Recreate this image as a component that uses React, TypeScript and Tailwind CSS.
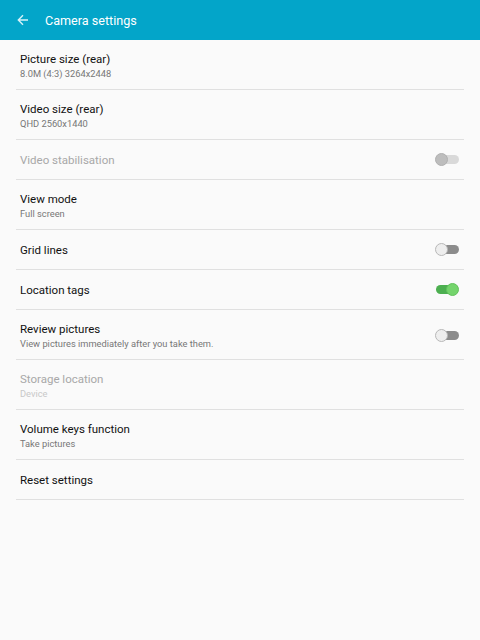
import React from "react";

type Sw = "disabled" | "off" | "on";
type Row = { title: string; sub?: string; disabled?: boolean; sw?: Sw };

const rows: Row[] = [
  { title: "Picture size (rear)", sub: "8.0M (4:3) 3264x2448" },
  { title: "Video size (rear)", sub: "QHD 2560x1440" },
  { title: "Video stabilisation", disabled: true, sw: "disabled" },
  { title: "View mode", sub: "Full screen" },
  { title: "Grid lines", sw: "off" },
  { title: "Location tags", sw: "on" },
  { title: "Review pictures", sub: "View pictures immediately after you take them.", sw: "off" },
  { title: "Storage location", sub: "Device", disabled: true },
  { title: "Volume keys function", sub: "Take pictures" },
  { title: "Reset settings" },
];

function Switch({ s }: { s: Sw }) {
  if (s === "on") {
    return (
      <div className="relative w-[24px] h-[13px] flex items-center">
        <div className="w-[22px] h-[9px] rounded-full bg-[#4caf50] ml-[1px]" />
        <div className="absolute right-0 top-0 w-[13px] h-[13px] rounded-full bg-[#74d46c] border border-[#62c25c]" />
      </div>
    );
  }
  if (s === "off") {
    return (
      <div className="relative w-[24px] h-[13px] flex items-center">
        <div className="w-[22px] h-[9px] rounded-full bg-[#8c8c8c] ml-[2px]" />
        <div className="absolute left-0 top-0 w-[13px] h-[13px] rounded-full bg-[#eeeeee] border border-[#b8b8b8]" />
      </div>
    );
  }
  return (
    <div className="relative w-[24px] h-[13px] flex items-center">
      <div className="w-[22px] h-[9px] rounded-full bg-[#d9d9d9] ml-[2px]" />
      <div className="absolute left-0 top-0 w-[13px] h-[13px] rounded-full bg-[#bdbdbd] border border-[#b0b0b0]" />
    </div>
  );
}

export default function App() {
  return (
    <div
      className="w-[480px] h-[640px] bg-[#fafafa] flex flex-col"
      style={{ fontFamily: "Roboto, 'Noto Sans', sans-serif" }}
    >
      <div className="h-[40px] bg-[#03a5c9] flex items-center shrink-0">
        <svg width="12" height="12" viewBox="0 0 12 12" className="ml-[17px]">
          <path d="M11 6H1.5M6 1.3L1.3 6L6 10.7" stroke="#d8f2f8" strokeWidth="1.4" fill="none" />
        </svg>
        <span className="ml-[16px] mt-[2px] text-[12.6px] text-white leading-none">Camera settings</span>
      </div>
      <div className="flex flex-col">
        {rows.map((r, i) => (
          <div
            key={i}
            className={`mx-[16px] border-b border-[#e0e0e0] flex items-center justify-between ${r.sub ? "h-[50px] pt-[1px]" : "h-[40px]"}`}
          >
            <div className="flex flex-col pl-[4px]">
              <span
                className={`text-[11.5px] leading-[14px] ${r.disabled ? "text-[#a8a8a8]" : "text-[#111111]"}`}
              >
                {r.title}
              </span>
              {r.sub && (
                <span
                  className={`text-[9.3px] leading-[11px] mt-[2px] ${r.disabled ? "text-[#c8c8c8]" : "text-[#777777]"}`}
                >
                  {r.sub}
                </span>
              )}
            </div>
            {r.sw && (
              <div className="mr-[5px]">
                <Switch s={r.sw} />
              </div>
            )}
          </div>
        ))}
      </div>
    </div>
  );
}
